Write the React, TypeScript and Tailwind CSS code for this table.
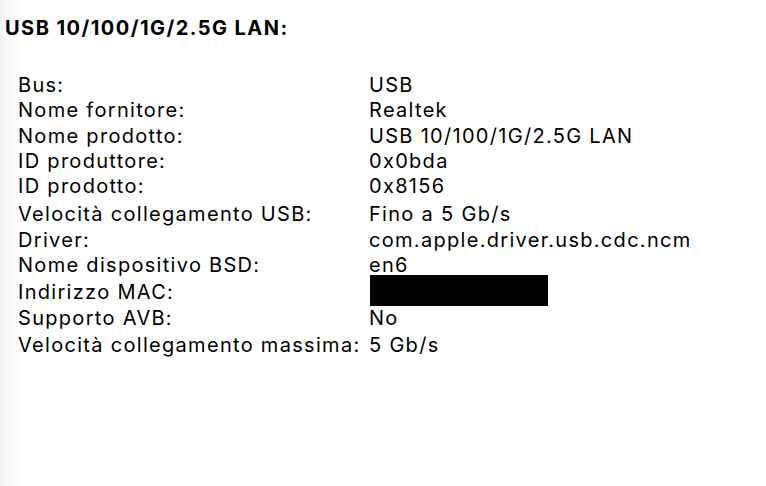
import React from "react";

const rows: { k: string; v: string; cls: string }[] = [
  { k: "Bus:", v: "USB", cls: "" },
  { k: "Nome fornitore:", v: "Realtek", cls: "" },
  { k: "Nome prodotto:", v: "USB 10/100/1G/2.5G LAN", cls: "" },
  { k: "ID produttore:", v: "0x0bda", cls: "" },
  { k: "ID prodotto:", v: "0x8156", cls: "" },
  { k: "Velocità collegamento USB:", v: "Fino a 5 Gb/s", cls: "mt-[3px]" },
  { k: "Driver:", v: "com.apple.driver.usb.cdc.ncm", cls: "" },
  { k: "Nome dispositivo BSD:", v: "en6", cls: "" },
  { k: "Indirizzo MAC:", v: "", cls: "mt-[2px]" },
  { k: "Supporto AVB:", v: "No", cls: "" },
  { k: "Velocità collegamento massima:", v: "5 Gb/s", cls: "mt-[2px]" },
];

export default function App() {
  return (
    <div
      className="w-[766px] h-[486px] overflow-hidden bg-[linear-gradient(to_right,#f2f2f2,#ffffff_22px)] text-black"
      style={{ fontFamily: "Inter, sans-serif" }}
    >
      <div className="pl-[5px] pt-[15px] text-[20px] font-bold leading-[26px] tracking-[1.45px]">
        USB 10/100/1G/2.5G LAN:
      </div>
      <div className="pl-[18px] pt-[32px] flex flex-col text-[20px] leading-[25.3px] tracking-[1.3px]">
        {rows.map((r) => (
          <div key={r.k} className={`flex ${r.cls}`}>
            <div className="w-[351px] shrink-0">{r.k}</div>
            <div className="relative">
              {r.k === "Indirizzo MAC:" ? (
                <div className="absolute left-[1px] top-[-5px] w-[178px] h-[31px] bg-black" />
              ) : (
                r.v
              )}
            </div>
          </div>
        ))}
      </div>
    </div>
  );
}
